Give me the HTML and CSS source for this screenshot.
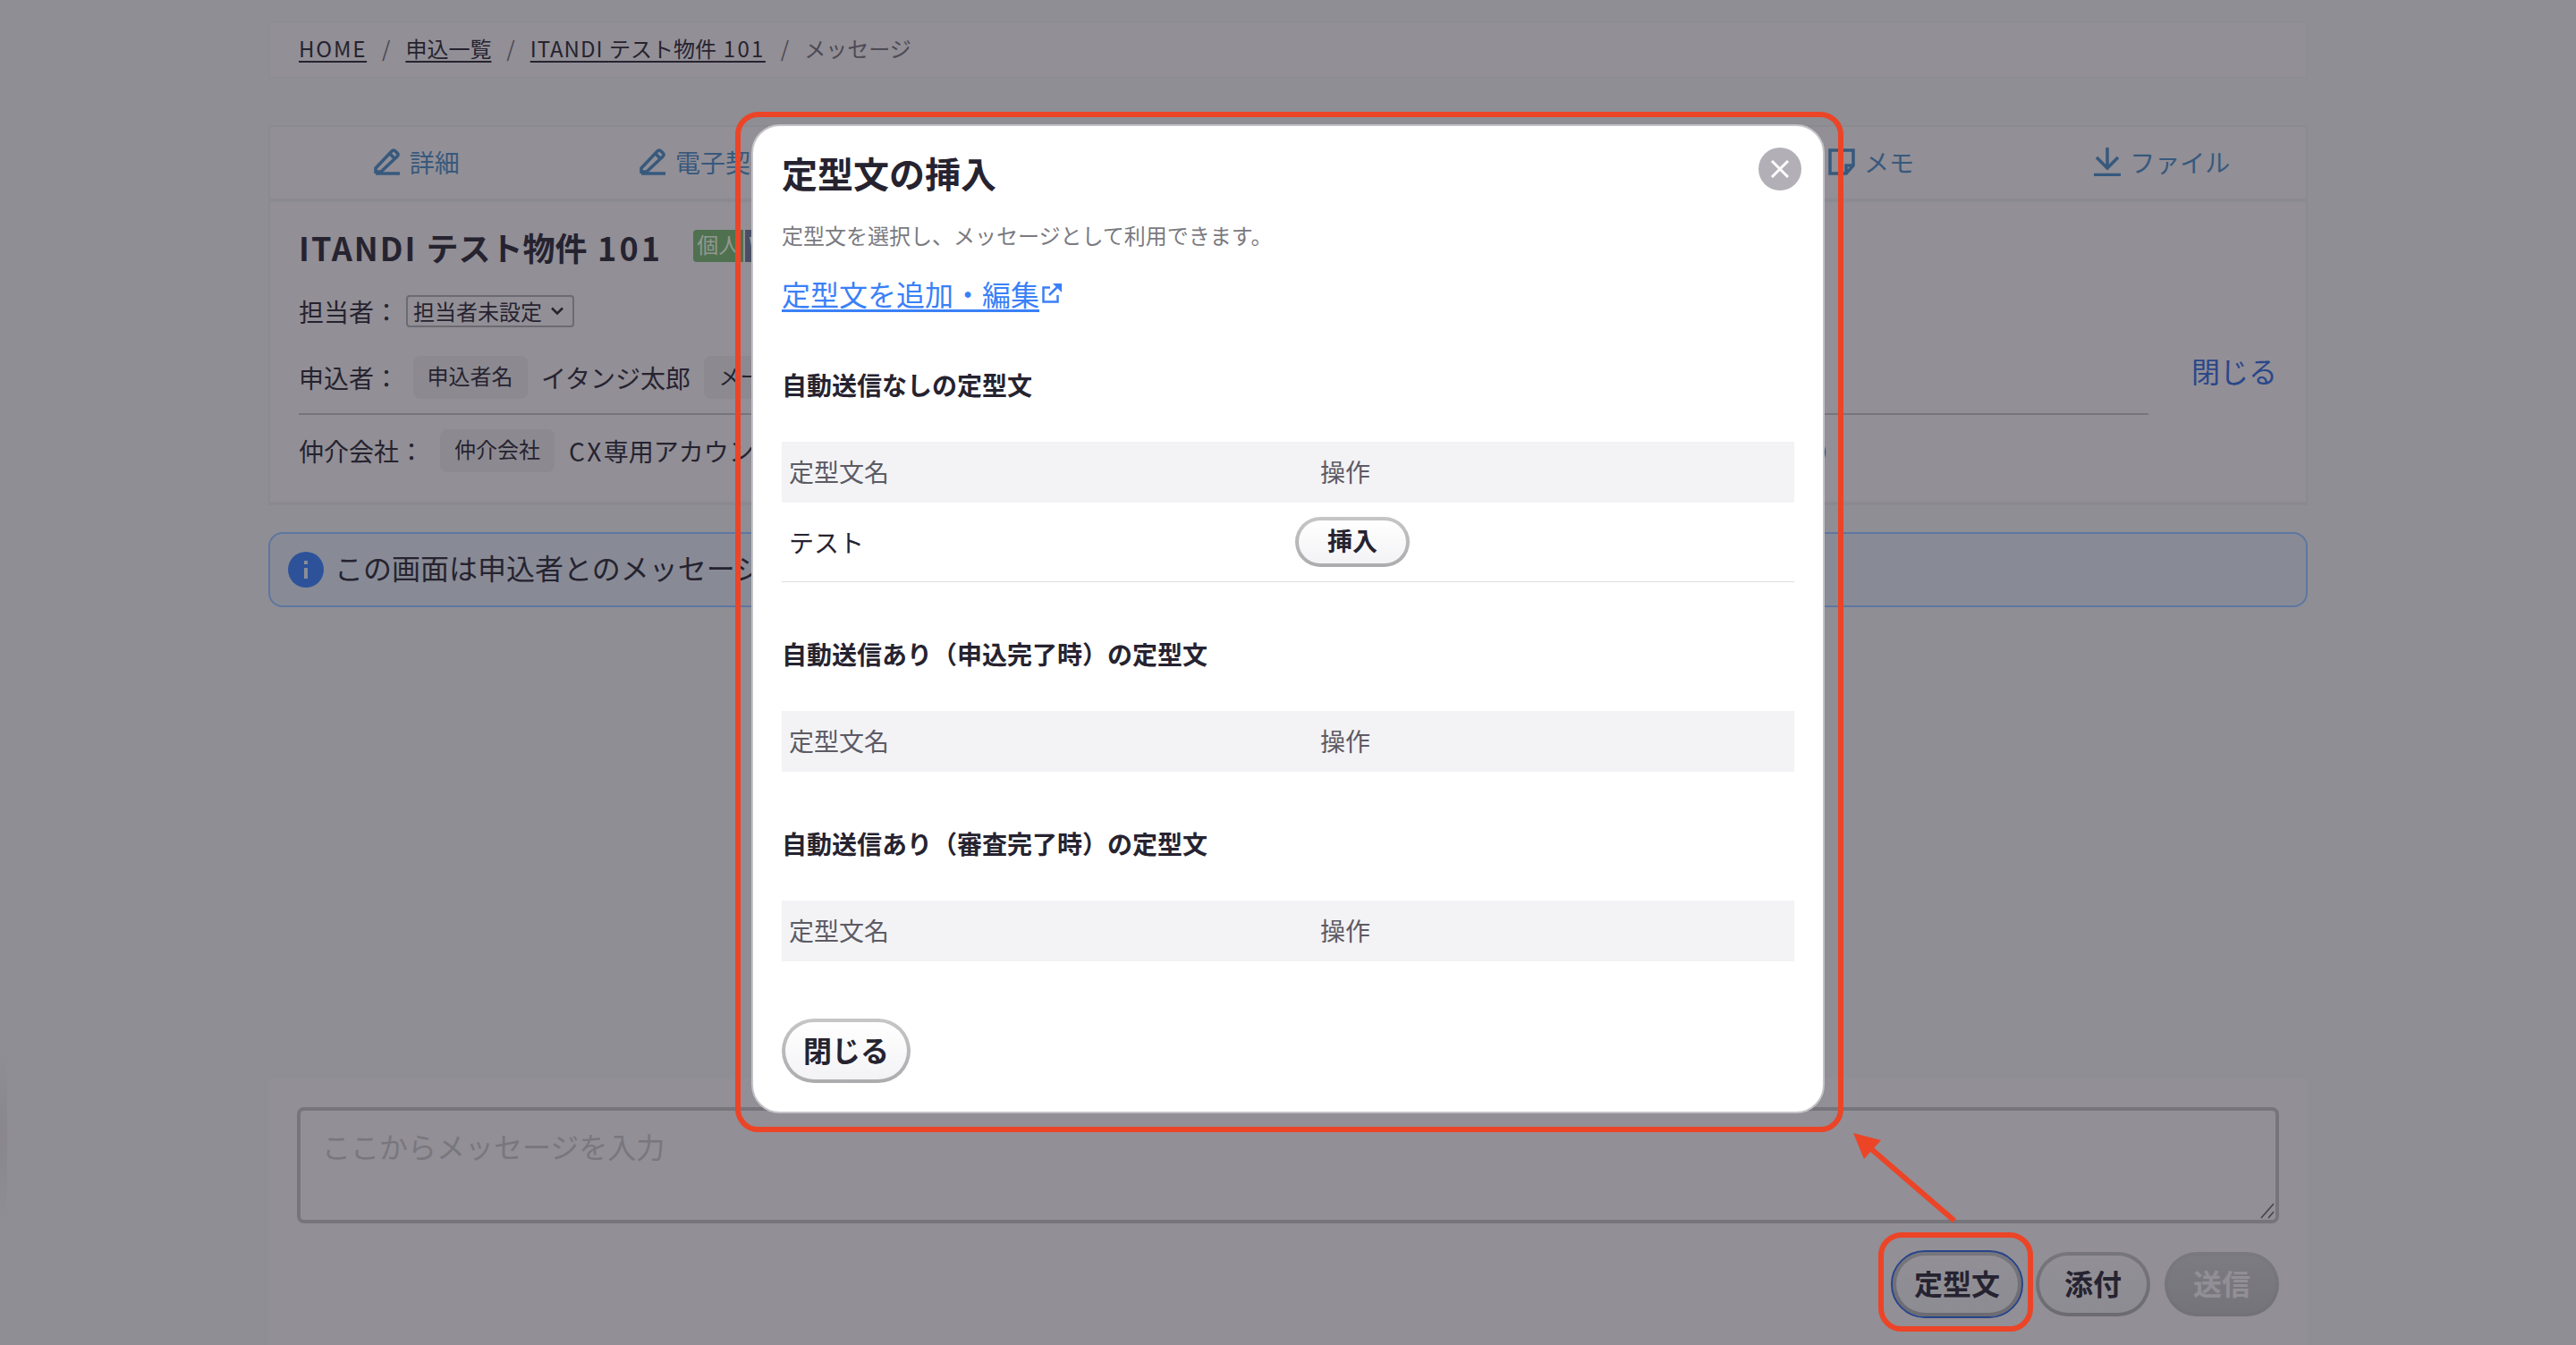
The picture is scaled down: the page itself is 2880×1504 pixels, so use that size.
FILE: index.html
```
<!DOCTYPE html>
<html lang="ja">
<head>
  <title>メッセージ</title>
  <meta charset="utf-8">
  <meta name="viewport" content="width=device-width, initial-scale=1">
  <link rel="stylesheet" href="styles.css">
</head>
<body>
  <div class="page">
    <nav class="breadcrumb">
      <a class="home" href="#">HOME</a>
      <span class="slash">/</span>
      <a href="#">申込一覧</a>
      <span class="slash">/</span>
      <a href="#"><span class="latin">ITANDI </span>テスト物件<span class="digits"> 101</span></a>
      <span class="slash">/</span>
      <span class="current">メッセージ</span>
    </nav>

    <section class="entry">
      <nav class="tabs">
        <a class="tab" href="#">
          <svg class="tab-icon" viewBox="0 0 30 30"><path d="M2 28h27M2 28v-6L20 3q2-2 4 0l2 2q2 2 0 4L8 26H2M18 6l5 5"/></svg>
          <span>詳細</span>
        </a>
        <a class="tab" href="#">
          <svg class="tab-icon" viewBox="0 0 30 30"><path d="M2 28h27M2 28v-6L20 3q2-2 4 0l2 2q2 2 0 4L8 26H2M18 6l5 5"/></svg>
          <span>電子契約</span>
        </a>
        <a class="tab tab-memo" href="#">
          <svg class="tab-icon" viewBox="0 0 30 30"><path d="M2 2h26v17l-8 9H2zM28 19h-8v9"/></svg>
          <span>メモ</span>
        </a>
        <a class="tab" href="#">
          <svg class="tab-icon tab-icon-file" viewBox="0 0 30 32"><path d="M15 0v23M3 11l12 12 12-12M0 30.500h30"/></svg>
          <span>ファイル</span>
        </a>
      </nav>

      <div class="summary">
        <div class="summary-main">
          <div class="heading">
            <h1><span class="latin">ITANDI </span>テスト物件<span class="digits"> 101</span></h1>
            <div class="badges">
              <span class="badge badge-green">個人</span>
              <span class="badge badge-navy">W</span>
            </div>
          </div>
          <div class="row row-staff">
            <span class="label">担当者：</span>
            <div class="select">担当者未設定
              <svg class="chevron" viewBox="0 0 14 10"><path d="M1 1.500l6 6 6-6"/></svg>
            </div>
          </div>
          <div class="row row-applicant">
            <span class="label">申込者：</span>
            <span class="chip">申込者名</span>
            <span>イタンジ太郎</span>
            <span class="chip">メール</span>
          </div>
          <div class="row row-agency">
            <span class="label">仲介会社：</span>
            <span class="chip">仲介会社</span>
            <span><span class="cx">CX</span>専用アカウント</span>
            <span class="tel">0</span>
          </div>
        </div>
        <a class="toggle" href="#">閉じる</a>
      </div>
    </section>

    <div class="info">
      <svg class="info-icon" viewBox="0 0 40 40">
        <circle cx="20" cy="20" r="20"/>
        <path d="M18 10h4v4h-4zM18 18h4v12h-4z"/>
      </svg>
      <span>この画面は申込者とのメッセージ</span>
    </div>

    <section class="composer">
      <div class="textarea">
        <span>ここからメッセージを入力</span>
        <svg class="resizer" viewBox="0 0 16 18"><path d="M1 17L15 1M9 17l6-7"/></svg>
      </div>
      <div class="actions">
        <button class="button button-dim is-focused">定型文</button>
        <button class="button button-dim">添付</button>
        <button class="button button-disabled">送信</button>
      </div>
    </section>
  </div>

  <div class="edge-shadow"></div>

  <div class="modal">
    <button class="modal-close">
      <svg viewBox="0 0 48 48"><path d="M15 15l18 18M33 15L15 33"/></svg>
    </button>
    <h2>定型文の挿入</h2>
    <p class="lead">定型文を選択し、メッセージとして利用できます。</p>
    <div class="edit">
      <a href="#">定型文を追加・編集</a>
      <svg class="external" viewBox="0 0 22 22"><path d="M9 4.500H1.500v16h16V13M8 13l9-9"/><path class="fill" d="M12 0h10v10z"/></svg>
    </div>

    <h3>自動送信なしの定型文</h3>
    <div class="table-head"><span>定型文名</span><span>操作</span></div>
    <div class="table-row">
      <span>テスト</span>
      <button class="button button-small">挿入</button>
    </div>

    <h3>自動送信あり（申込完了時）の定型文</h3>
    <div class="table-head"><span>定型文名</span><span>操作</span></div>

    <h3>自動送信あり（審査完了時）の定型文</h3>
    <div class="table-head"><span>定型文名</span><span>操作</span></div>

    <button class="button modal-cancel">閉じる</button>
  </div>

  <!-- red guide marks over the screen -->
  <div class="mark mark-modal"></div>
  <div class="mark mark-button"></div>
  <svg class="arrow" viewBox="0 0 120 106">
    <path class="arrow-line" d="M20 17L115 99"/>
    <path class="arrow-head" d="M2 1l31 8-19 21z"/>
  </svg>
</body>
</html>
```

FILE: styles.css
```
*, *::before, *::after {
  margin: 0;
  padding: 0;
  box-sizing: border-box;
}

body {
  position: relative;
  width: 2880px;
  height: 1504px;
  overflow: hidden;
  background-color: #8e8e94;
  color: #262330;
  font-family: "Noto Sans CJK JP", sans-serif;
  font-size: 28px;
  line-height: 40px;
}

svg {
  display: block;
  flex-shrink: 0;
}

a {
  color: inherit;
  text-decoration: none;
}

button {
  font-family: inherit;
  color: inherit;
}

.page {
  display: flex;
  flex-direction: column;
  width: 2280px;
  height: 1504px;
  margin: 0 auto;
  padding-top: 24px;
}

.breadcrumb {
  display: flex;
  align-items: center;
  height: 64px;
  padding: 0 32px 5px;
  border: 2px solid #8d8c92;
  background-color: #928f96;
  font-size: 24px;
  line-height: 36px;
  white-space: pre;
}

.breadcrumb a {
  text-decoration: underline;
  text-decoration-thickness: 2px;
  text-underline-offset: 4px;
}

.breadcrumb .home {
  letter-spacing: 1.8px;
}

.breadcrumb .latin {
  letter-spacing: 1px;
}

.breadcrumb .digits {
  letter-spacing: 2.4px;
}

.slash {
  width: 43.3px;
  text-align: center;
  color: #4c4a54;
}

.current {
  color: #4c4a54;
}

.entry {
  margin-top: 52px;
  border: 2px solid #8c8a91;
  border-bottom: 4px solid #8b8990;
  background-color: #928f96;
}

.tabs {
  display: grid;
  grid-template-columns: repeat(7, 1fr);
  height: 84px;
  padding-left: 1px;
  margin-right: -2px;
  border-bottom: 4px solid #8c8a91;
  color: #37597d;
}

.tab {
  display: flex;
  align-items: center;
  justify-content: center;
  gap: 10px;
  padding-bottom: 2px;
}

.tab-memo {
  grid-column: 6;
}

.tab-icon {
  width: 30px;
  height: 30px;
  fill: none;
  stroke: currentColor;
  stroke-width: 3.500;
}

.tab-icon-file {
  height: 32px;
}

.summary {
  display: flex;
  justify-content: space-between;
  height: 335px;
  padding: 28px 32px 0;
}

.summary-main {
  width: 2068px;
}

.heading {
  display: flex;
  align-items: center;
  height: 44px;
}

h1 {
  font-size: 36px;
  line-height: 44px;
  white-space: pre;
}

h1 .latin {
  letter-spacing: 2px;
}

h1 .digits {
  letter-spacing: 3.2px;
}

.badges {
  display: flex;
  gap: 2px;
  margin: -2px 0 0 34px;
}

.badge {
  height: 36px;
  padding: 0 4px;
  font-size: 24px;
  line-height: 32px;
  color: #939893;
}

.badge-green {
  border-radius: 4px 0 0 4px;
  background-color: #4f7150;
}

.badge-navy {
  background-color: #4a4e65;
}

.row {
  display: flex;
  align-items: center;
  gap: 16px;
}

.row-staff {
  height: 38px;
  margin-top: 31px;
  gap: 8px;
}

.select {
  display: flex;
  align-items: center;
  width: 188px;
  height: 36px;
  padding-left: 6px;
  border: 2px solid #6d6b72;
  border-radius: 4px;
  font-size: 24px;
  line-height: 30px;
  white-space: nowrap;
}

.chevron {
  width: 14px;
  height: 10px;
  margin-left: 10px;
  fill: none;
  stroke: currentColor;
  stroke-width: 2.500;
}

.row-applicant {
  height: 82px;
  margin-top: 15px;
  gap: 15.5px;
  border-bottom: 2px solid #77757c;
}

.row-agency {
  height: 80px;
}

.row-agency .label {
  margin-right: 2px;
}

.row-applicant,
.row-agency {
  white-space: nowrap;
}

.chip {
  height: 48px;
  padding: 0 16px;
  border-radius: 8px;
  background-color: #8c8a90;
  font-size: 24px;
  line-height: 44px;
}

.cx {
  letter-spacing: 2.5px;
}

.tel {
  margin-left: auto;
  margin-right: 360px;
}

.toggle {
  align-self: flex-start;
  margin-top: 138px;
  font-size: 32px;
  line-height: 44px;
  color: #2a478a;
}

.info {
  display: flex;
  align-items: center;
  height: 84px;
  margin-top: 30px;
  padding-left: 20px;
  gap: 12px;
  border: 2px solid #5e76a1;
  border-radius: 16px;
  background-color: #888b96;
  font-size: 32px;
}

.info span {
  margin-top: -7px;
}

.info-icon {
  width: 40px;
  height: 40px;
  fill: #2e529a;
}

.info-icon path {
  fill: #8a8c96;
}

.composer {
  height: 298px;
  margin-top: auto;
  padding: 32px;
  background-color: #928f96;
}

.textarea {
  position: relative;
  height: 130px;
  padding: 17px 24px;
  border: 4px solid #76757b;
  border-radius: 8px;
  color: #79777e;
  font-size: 32px;
  line-height: 44px;
}

.resizer {
  position: absolute;
  right: 1px;
  bottom: 1px;
  width: 16px;
  height: 18px;
  fill: none;
  stroke: #44424c;
  stroke-width: 1.500;
}

.actions {
  display: flex;
  justify-content: flex-end;
  gap: 16px;
  margin-top: 32px;
}

.button {
  width: 128px;
  height: 72px;
  padding-bottom: 4px;
  border: 4px solid transparent;
  border-radius: 36px;
  background: linear-gradient(#fff, #f3f3f6) padding-box, linear-gradient(#c6c6c6, #acacae) border-box;
  font-size: 32px;
  font-weight: 700;
  line-height: 44px;
}

.button-dim {
  background: linear-gradient(#928f96, #8d8c93) padding-box, linear-gradient(#77767c, #6c6b71) border-box;
}

.is-focused {
  width: 144px;
  outline: 2px solid #27448a;
}

.button-disabled {
  background: linear-gradient(#7d7b82, #76747b) padding-box, linear-gradient(#7a797f, #737178) border-box;
  color: #928f96;
}

.button-small {
  height: 56px;
  font-size: 28px;
  line-height: 40px;
}

.edge-shadow {
  position: absolute;
  left: 0;
  top: 1173px;
  width: 8px;
  height: 194px;
  background: linear-gradient(#8e8e94, #89878d 50%, #8e8e94);
}

.modal {
  position: absolute;
  left: 840px;
  top: 139px;
  width: 1200px;
  height: 1106px;
  padding: 28px 32px;
  border: 2px solid #c4c3c8;
  border-radius: 32px;
  background-color: #fff;
}

.modal-close {
  position: absolute;
  top: 24px;
  right: 24px;
  width: 48px;
  height: 48px;
  border: none;
  border-radius: 50%;
  background-color: #b2b0b6;
}

.modal-close svg {
  fill: none;
  stroke: #fff;
  stroke-width: 3;
}

h2 {
  font-size: 40px;
  line-height: 48px;
}

.lead {
  margin-top: 28px;
  font-size: 24px;
  line-height: 36px;
  color: #7a7a80;
}

.edit {
  display: flex;
  gap: 3px;
  margin-top: 25px;
  color: #3a80f8;
  font-size: 32px;
  line-height: 44px;
}

.edit a {
  text-decoration: underline;
  text-decoration-thickness: 3px;
  text-underline-offset: 4px;
}

.external {
  width: 22px;
  height: 22px;
  margin-top: 11px;
  fill: none;
  stroke: currentColor;
  stroke-width: 2.500;
}

.external .fill {
  fill: currentColor;
  stroke: none;
}

h3 {
  font-size: 28px;
  line-height: 40px;
}

.edit + h3 {
  margin-top: 60px;
}

.table-head,
.table-row {
  display: grid;
  grid-template-columns: 594px 1fr;
  align-items: center;
  padding: 0 8px;
}

.table-head {
  height: 68px;
  margin-top: 44px;
  padding-bottom: 3px;
  background-color: #f3f3f5;
  color: #5d5b64;
}

.table-row {
  height: 89px;
  border-bottom: 1px solid #dededf;
}

.table-row .button {
  margin-left: -28px;
}

.table-row + h3,
.table-head + h3 {
  margin-top: 60px;
}

.modal-cancel {
  display: block;
  width: 144px;
  margin-top: 64px;
}

.mark {
  position: absolute;
  border: 6px solid #ec4427;
  border-radius: 26px;
}

.mark-modal {
  left: 822px;
  top: 125px;
  width: 1239px;
  height: 1141px;
}

.mark-button {
  left: 2100px;
  top: 1378px;
  width: 173px;
  height: 111px;
}

.arrow {
  position: absolute;
  left: 2070px;
  top: 1266px;
  width: 120px;
  height: 106px;
}

.arrow-line {
  stroke: #ec4427;
  stroke-width: 6;
}

.arrow-head {
  fill: #ec4427;
}
```
